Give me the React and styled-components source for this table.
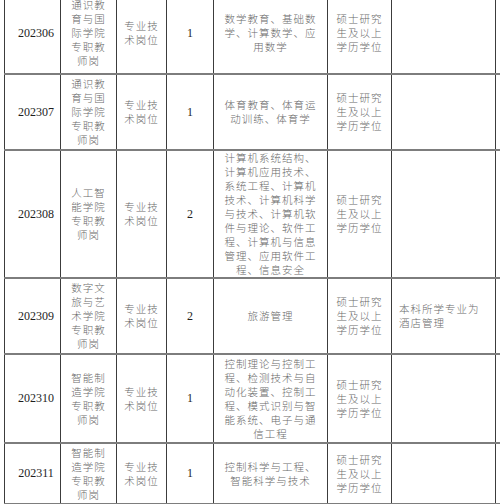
import styled, { createGlobalStyle } from 'styled-components'

const GlobalStyle = createGlobalStyle`
  html, body {
    margin: 0;
    padding: 0;
    background: #ffffff;
    overflow: hidden;
  }
`

const rows = [
  {
    code: '202306',
    dept: '通识教育与国际学院专职教师岗',
    count: '1',
    major: '数学教育、基础数学、计算数学、应用数学',
    h: 82,
  },
  {
    code: '202307',
    dept: '通识教育与国际学院专职教师岗',
    count: '1',
    major: '体育教育、体育运动训练、体育学',
    h: 76,
  },
  {
    code: '202308',
    dept: '人工智能学院专职教师岗',
    count: '2',
    major:
      '计算机系统结构、计算机应用技术、系统工程、计算机技术、计算机科学与技术、计算机软件与理论、软件工程、计算机与信息管理、应用软件工程、信息安全',
    h: 128,
  },
  {
    code: '202309',
    dept: '数字文旅与艺术学院专职教师岗',
    count: '2',
    major: '旅游管理',
    note: '本科所学专业为酒店管理',
    h: 76,
  },
  {
    code: '202310',
    dept: '智能制造学院专职教师岗',
    count: '1',
    major:
      '控制理论与控制工程、检测技术与自动化装置、控制工程、模式识别与智能系统、电子与通信工程',
    h: 89,
  },
  {
    code: '202311',
    dept: '智能制造学院专职教师岗',
    count: '1',
    major: '控制科学与工程、智能科学与技术',
    h: 61,
  },
]

const Page = styled.div`
  padding-left: 4px;
  margin-top: -7px;
`

const Row = styled.div`
  display: grid;
  grid-template-columns: 56px 56px 50px 47px 114px 64px 105px;
  height: ${(p) => p.h}px;
  box-sizing: border-box;
  border-bottom: 2px solid #7d7d7d;
`

const Cell = styled.div`
  box-sizing: border-box;
  min-width: 0;
  border-left: 1px solid #3c3c3c;
  display: flex;
  align-items: center;
  justify-content: ${(p) => (p.left ? 'flex-start' : 'center')};
  padding-left: ${(p) => p.padL || 0}px;

  &:last-child {
    border-right: 1px solid #3c3c3c;
  }
`

const Num = styled.span`
  font-family: 'Liberation Serif', 'Times New Roman', serif;
  font-size: 12px;
  color: #1e1e1e;
`

const Zh = styled.div`
  flex: none;
  width: ${(p) => p.w}px;
  font-family: 'Noto Sans CJK SC', sans-serif;
  font-weight: 300;
  font-size: 10.5px;
  letter-spacing: 1px;
  line-height: 14px;
  color: #6a6a6a;
  text-align: ${(p) => (p.left ? 'left' : 'center')};
  word-break: break-all;
`

export default function App() {
  return (
    <>
      <GlobalStyle />
      <Page>
        {rows.map((r) => (
          <Row key={r.code} h={r.h}>
            <Cell padL={7}>
              <Num>{r.code}</Num>
            </Cell>
            <Cell>
              <Zh w={36}>{r.dept}</Zh>
            </Cell>
            <Cell>
              <Zh w={36}>专业技术岗位</Zh>
            </Cell>
            <Cell>
              <Num>{r.count}</Num>
            </Cell>
            <Cell>
              <Zh w={96}>{r.major}</Zh>
            </Cell>
            <Cell>
              <Zh w={48}>硕士研究生及以上学历学位</Zh>
            </Cell>
            <Cell left padL={7}>
              {r.note && (
                <Zh left w={86}>
                  {r.note}
                </Zh>
              )}
            </Cell>
          </Row>
        ))}
      </Page>
    </>
  )
}
